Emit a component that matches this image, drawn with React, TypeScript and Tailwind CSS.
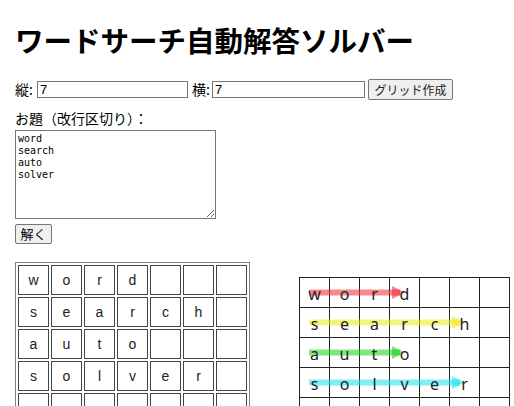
import React from "react";

const rows = ["word", "search", "auto", "solver", "", "", ""];
const N = 7;
const arrowColors = [
  "rgba(240,40,50,0.55)",
  "rgba(235,235,20,0.55)",
  "rgba(20,210,20,0.55)",
  "rgba(20,225,235,0.55)",
];

const cellChar = (r: number, c: number) => rows[r][c] ?? "";

export default function App() {
  const jp = { fontFamily: '"Noto Sans CJK JP", "Noto Sans", sans-serif' };
  return (
    <div className="px-[15px] pt-[24px] text-black bg-white min-h-[406px]" style={jp}>
      <h1 className="text-[28.5px] leading-[32px] font-bold m-0">ワードサーチ自動解答ソルバー</h1>

      <div className="mt-[23px] flex items-center h-[21px] text-[14px]">
        <span className="w-[22px]">縦:</span>
        <input
          defaultValue="7"
          className="w-[151px] h-[17px] border border-[#767676] px-[2px] text-[13px] leading-[15px] outline-none"
          style={{ fontFamily: '"Liberation Sans", Arial, sans-serif' }}
        />
        <span className="ml-[4px] w-[20px]">横:</span>
        <input
          defaultValue="7"
          className="w-[153px] h-[17px] border border-[#767676] px-[2px] text-[13px] leading-[15px] outline-none"
          style={{ fontFamily: '"Liberation Sans", Arial, sans-serif' }}
        />
        <button className="ml-[3px] w-[85px] h-[21px] border border-[#767676] rounded-[2px] bg-[#efefef] text-[12px] leading-[19px] text-[#222]">
          グリッド作成
        </button>
      </div>

      <div className="mt-[8px] text-[14px] leading-[20px]">お題（改行区切り）：</div>
      <textarea
        className="block mt-[2px] w-[201px] h-[89px] border border-[#767676] px-[2px] py-[2px] text-[10px] leading-[12px] outline-none resize"
        style={{ fontFamily: '"DejaVu Sans Mono", "Liberation Mono", monospace' }}
        defaultValue={"word\nsearch\nauto\nsolver"}
      />
      <button className="block mt-[5px] w-[37px] h-[20px] border border-[#767676] rounded-[2px] bg-[#efefef] text-[13px] leading-[18px] text-black">
        解く
      </button>

      <div className="flex items-start mt-[18px]">
        <table
          className="border border-[#808080] border-separate border-spacing-[2px]"
          style={{ fontFamily: '"Liberation Sans", Arial, sans-serif' }}
        >
          <tbody>
            {Array.from({ length: N }).map((_, r) => (
              <tr key={r}>
                {Array.from({ length: N }).map((_, c) => (
                  <td key={c} className="p-0 border border-[#444]">
                    <div className="w-[29px] h-[28px] flex items-center justify-center text-[14px] text-[#222]">
                      {cellChar(r, c)}
                    </div>
                  </td>
                ))}
              </tr>
            ))}
          </tbody>
        </table>

        <div className="relative ml-[49px] mt-[15px]">
          <svg className="absolute left-0 top-0 pointer-events-none" width={211} height={211}>
            {arrowColors.map((col, r) => {
              const len = rows[r].length;
              const y = r * 30 + 15.5;
              const tip = (len - 1) * 30 + 16;
              const x0 = 10;
              return (
                <g key={r}>
                  <line x1={x0} y1={y} x2={tip - 5} y2={y} stroke={col} strokeWidth={6} />
                  <polygon points={`${tip - 13},${y - 6.5} ${tip},${y} ${tip - 13},${y + 6.5}`} fill={col} />
                </g>
              );
            })}
          </svg>
          <table className="border-collapse" style={{ fontFamily: '"Noto Sans", "Open Sans", sans-serif' }}>
            <tbody>
              {Array.from({ length: N }).map((_, r) => (
                <tr key={r}>
                  {Array.from({ length: N }).map((_, c) => (
                    <td key={c} className="p-0 border border-[#222]">
                      <div className="relative w-[29px] h-[29px] flex items-center justify-center pt-[3px] text-[16px] leading-[20px] text-[#222]">
                        {cellChar(r, c)}
                      </div>
                    </td>
                  ))}
                </tr>
              ))}
            </tbody>
          </table>
        </div>
      </div>
    </div>
  );
}
